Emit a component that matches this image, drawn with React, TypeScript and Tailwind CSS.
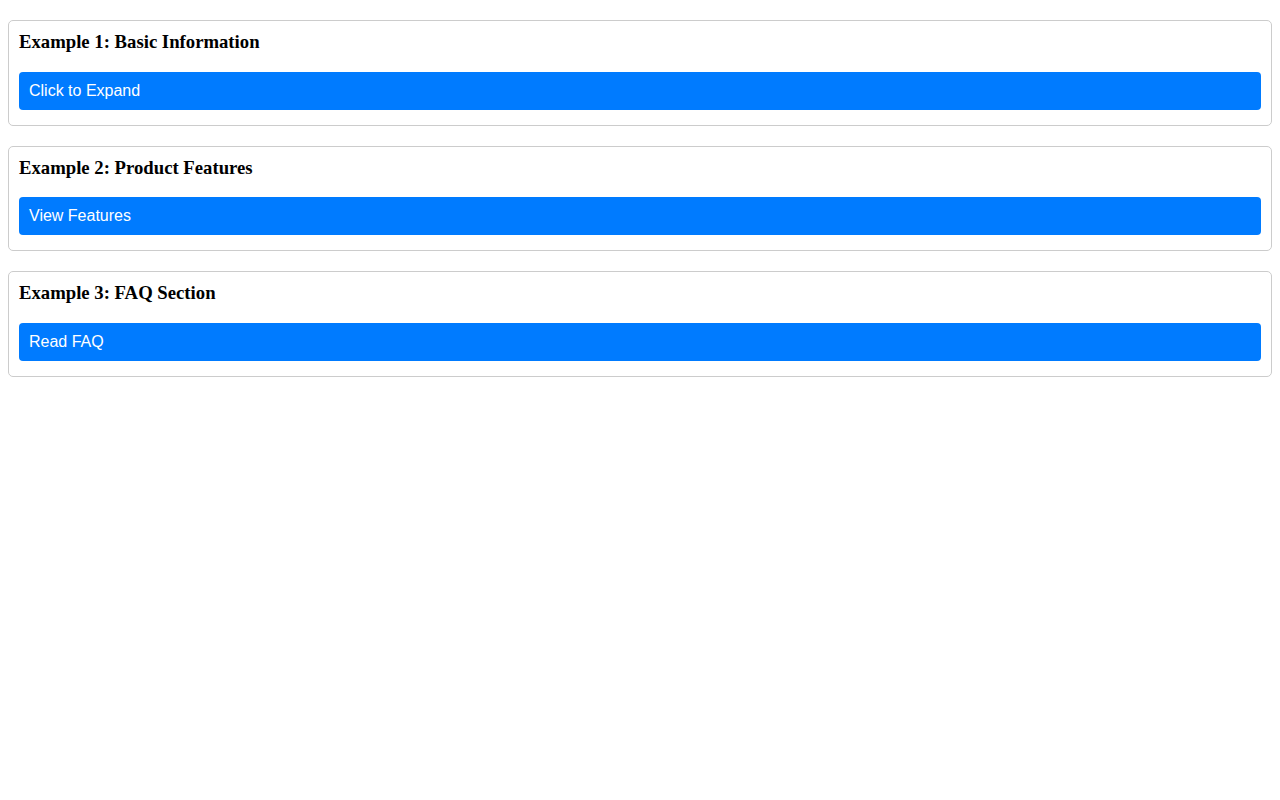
import React from "react";

const items = [
  { title: "Example 1: Basic Information", button: "Click to Expand" },
  { title: "Example 2: Product Features", button: "View Features" },
  { title: "Example 3: FAQ Section", button: "Read FAQ" },
];

export default function App() {
  return (
    <div className="min-h-[800px] bg-white px-2 pt-[20px] flex flex-col gap-[20px]">
      {items.map((it) => (
        <div key={it.title} className="border border-[#cccccc] rounded-[5px] p-[10px]">
          <h3
            className="text-[18.72px] font-bold leading-[normal] text-black mb-[18.72px]"
            style={{ fontFamily: '"Liberation Serif", "Times New Roman", serif' }}
          >
            {it.title}
          </h3>
          <button
            className="block w-full text-left bg-[#007bff] text-white text-[16px] leading-[normal] px-[10px] py-[10px] rounded-[4px] mb-[5px]"
            style={{ fontFamily: '"Liberation Sans", Arial, sans-serif' }}
          >
            {it.button}
          </button>
        </div>
      ))}
    </div>
  );
}
